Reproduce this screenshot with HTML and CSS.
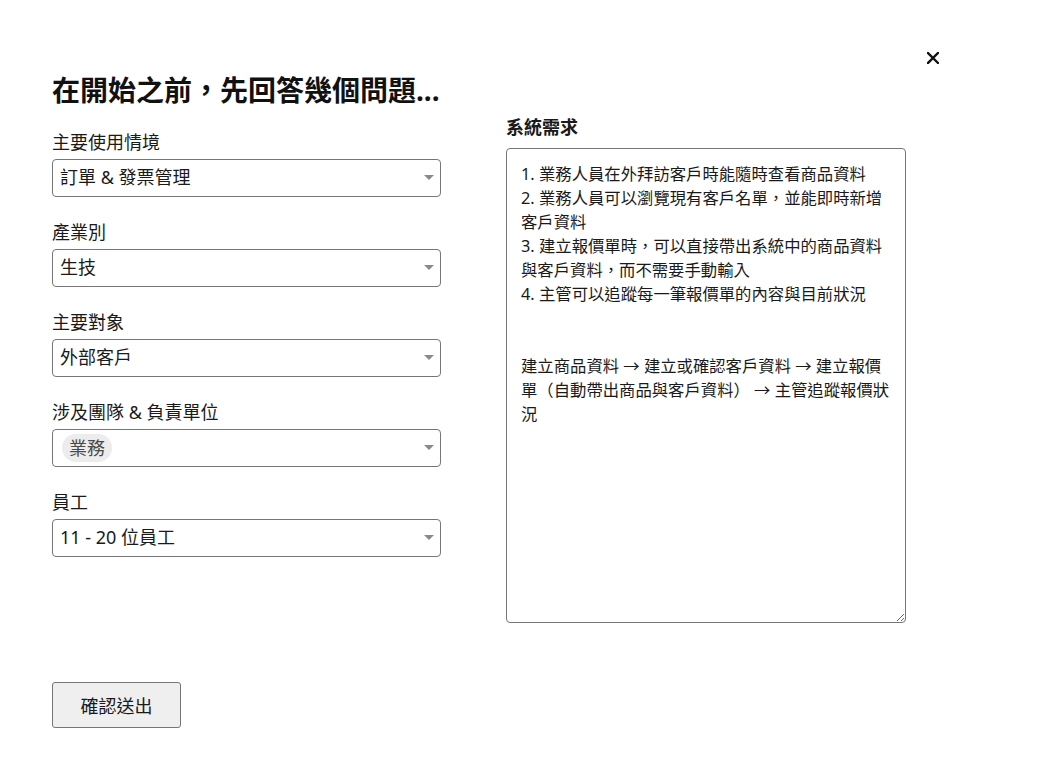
FILE: index.html
```html
<!DOCTYPE html>
<html lang="zh-Hant">
<head>
<meta charset="utf-8">
<title>在開始之前</title>
<link rel="stylesheet" href="styles.css">
</head>
<body>
<div class="page">
  <button class="close" aria-label="關閉">
    <svg width="12" height="12" viewBox="0 0 12 12"><path d="M1 1L11 11M11 1L1 11" stroke="#111" stroke-width="2.4" stroke-linecap="square"/></svg>
  </button>
  <div class="form-grid">
    <div class="col-left">
      <h1 class="title">在開始之前，先回答幾個問題...</h1>
      <div class="field">
        <div class="label">主要使用情境</div>
        <div class="select"><span class="value">訂單 &amp; 發票管理</span><span class="arrow"></span></div>
      </div>
      <div class="field">
        <div class="label">產業別</div>
        <div class="select"><span class="value">生技</span><span class="arrow"></span></div>
      </div>
      <div class="field">
        <div class="label">主要對象</div>
        <div class="select"><span class="value">外部客戶</span><span class="arrow"></span></div>
      </div>
      <div class="field">
        <div class="label">涉及團隊 &amp; 負責單位</div>
        <div class="select select-tags"><span class="tag">業務</span><span class="arrow"></span></div>
      </div>
      <div class="field">
        <div class="label">員工</div>
        <div class="select"><span class="value">11 - 20 位員工</span><span class="arrow"></span></div>
      </div>
    </div>
    <div class="col-right">
      <div class="label label-bold">系統需求</div>
      <textarea class="requirements">1. 業務人員在外拜訪客戶時能隨時查看商品資料
2. 業務人員可以瀏覽現有客戶名單，並能即時新增客戶資料
3. 建立報價單時，可以直接帶出系統中的商品資料與客戶資料，而不需要手動輸入
4. 主管可以追蹤每一筆報價單的內容與目前狀況


建立商品資料 → 建立或確認客戶資料 → 建立報價單（自動帶出商品與客戶資料） → 主管追蹤報價狀況</textarea>
    </div>
  </div>
  <button class="submit">確認送出</button>
</div>
</body>
</html>
```

FILE: styles.css
```css
* { box-sizing: border-box; }
html, body { margin: 0; padding: 0; background: #fff; }
body {
  font-family: "Noto Sans", "Noto Sans CJK TC", sans-serif;
  color: #1a1a1a;
}
.page {
  position: relative;
  padding: 69px 0 0 52px;
  min-height: 758px;
}
.close {
  position: absolute;
  top: 52px;
  right: 122px;
  width: 12px;
  height: 12px;
  padding: 0;
  border: 0;
  background: none;
  display: block;
  cursor: pointer;
}
.close svg { display: block; }
.form-grid {
  display: grid;
  grid-template-columns: 389px 400px;
  column-gap: 65px;
  align-items: start;
}
.title {
  margin: 0 0 17.5px;
  font-size: 28px;
  line-height: 42px;
  font-weight: 700;
  color: #111;
  white-space: nowrap;
}
.field { margin-bottom: 22px; }
.label {
  font-size: 18px;
  line-height: 27px;
  margin-bottom: 3px;
  color: #1a1a1a;
}
.label-bold { font-weight: 700; margin-bottom: 6.5px; }
.select {
  height: 38px;
  border: 1px solid #767676;
  border-radius: 4px;
  display: flex;
  align-items: center;
  justify-content: space-between;
  padding: 0 5px 0 7px;
  font-size: 18px;
  background: #fff;
}
.value { line-height: 27px; }
.arrow {
  width: 0;
  height: 0;
  border-left: 5px solid transparent;
  border-right: 5px solid transparent;
  border-top: 5px solid #8a8a8a;
  margin-right: 1px;
}
.select-tags { padding-left: 9px; }
.tag {
  background: #ececec;
  border-radius: 14px;
  height: 28px;
  line-height: 28px;
  padding: 0 7px;
  color: #4a4a4a;
}
.col-right { padding-top: 45px; }
.requirements {
  display: block;
  width: 400px;
  height: 475px;
  border: 1px solid #767676;
  border-radius: 4px;
  padding: 13px 14px 12px;
  font-family: "Noto Sans", "Noto Sans CJK TC", sans-serif;
  font-size: 16.35px;
  line-height: 24px;
  color: #1a1a1a;
  resize: vertical;
  background: #fff;
  margin: 0;
}
.submit {
  display: block;
  margin-top: 59px;
  width: 129px;
  height: 46px;
  border: 1px solid #767676;
  border-radius: 3px;
  background: #efefef;
  font-family: "Noto Sans", "Noto Sans CJK TC", sans-serif;
  font-size: 18px;
  color: #1a1a1a;
  padding: 0;
}
```
